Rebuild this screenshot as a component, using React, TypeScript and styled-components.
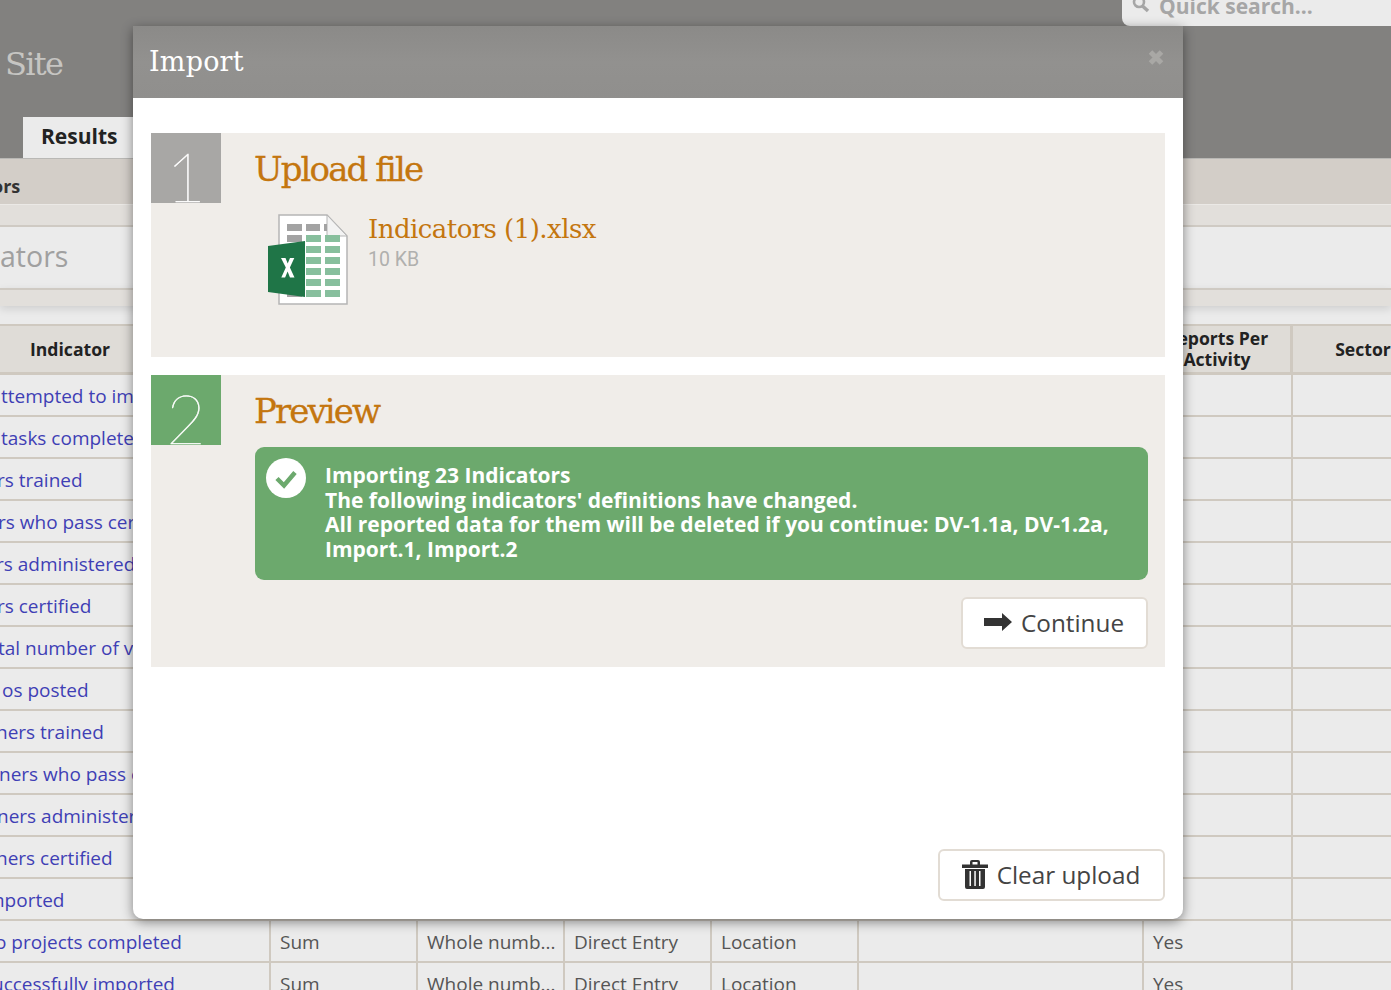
import React from "react";
import styled, { createGlobalStyle } from "styled-components";

const Global = createGlobalStyle`
  html, body { margin: 0; padding: 0; background: #ebebeb; }
  body { width: 1391px; height: 990px; overflow: hidden; font-family: "Open Sans", "Liberation Sans", sans-serif; }
  * { box-sizing: border-box; }
`;
const Page = styled.div`width: 1391px; height: 990px; overflow: hidden; position: relative; background: #ebebeb;`;
const Header = styled.header`height: 159px; background: #82817f; border-bottom: 1px solid #b9b8b5; display: flex; flex-direction: column;`;
const SearchRow = styled.div`height: 26px; display: flex; justify-content: flex-end;`;
const SearchBox = styled.div`width: 269px; height: 26px; background: #ebebeb; border-bottom-left-radius: 8px; display: flex; align-items: flex-end; gap: 9px; padding: 0 0 0 10px; color: #a6a6a6; font-weight: 700; font-size: 21px; line-height: 30px; overflow: hidden;
  svg { flex: none; margin-bottom: 11px; }
  span { margin-bottom: 5px; white-space: nowrap; }`;
const SiteTitle = styled.div`height: 91px; padding: 0 0 0 5px; font-family: "DejaVu Serif", serif; font-weight: 300; font-size: 32px; line-height: 76px; color: #c6c5c2; letter-spacing: -1.7px;`;
const Tabs = styled.div`display: flex; padding-left: 23px;`;
const Tab = styled.div`height: 41px; width: 140px; background: #ebebeb; font-weight: 700; font-size: 21px; line-height: 38px; padding-left: 18px; color: #222;`;
const NavBand = styled.div`height: 46px; background: #d3cec8; font-weight: 700; font-size: 18px; line-height: 54px; color: #333; text-indent: -8px; border-bottom: 1px solid #ebe9e6; overflow: hidden;`;
const ThinBand = styled.div<{ $h: number }>`height: ${p => p.$h}px; background: #e2dfdb; border-bottom: 2px solid #cfcac3;`;
const TitleBand = styled.div`height: 61px; background: #ebebeb; font-size: 28.500px; line-height: 58px; color: #a0a0a0; text-indent: 0;`;
const LowerBand = styled.div`height: 18px; background: #e2dfdb; border-top: 2px solid #cfcac3; box-shadow: 0 3px 8px rgba(0,0,0,.12);`;
const Gap = styled.div`height: 18px;`;
const Table = styled.div`margin-left: -128px; width: 1568px; border-top: 2px solid #cfc9c0; display: grid; grid-template-columns: 399px 147px 147px 147px 147px 285px 149px 143px;`;
const HeadCell = styled.div`height: 49px; background: #dfdcd7; border-bottom: 3px solid #cfc9c0; border-right: 3px solid #cfc9c0; display: flex; align-items: center; justify-content: center; text-align: center; font-weight: 700; font-size: 17.600px; line-height: 21px; color: #222;`;
const Cell = styled.div`height: 42px; border-bottom: 2px solid #cfc9c0; border-right: 2px solid #cfc9c0; padding: 0 9px; font-size: 19px; line-height: 42px; color: #555; white-space: nowrap; overflow: hidden; background: #ebebeb;`;
const LinkCell = styled(Cell)<{ $x: number }>`color: #3f3fb5; padding-left: ${p => 128 + p.$x}px;`;

const Backdrop = styled.div`position: absolute; left: 133px; top: 26px; width: 1050px; height: 893px; background: #fff; border-radius: 0 0 10px 10px; box-shadow: 0 3px 12px rgba(0,0,0,.45); display: flex; flex-direction: column;`;
const ModalHead = styled.div`height: 72px; background: linear-gradient(180deg,#8b8a88,#92918f 50%,#908f8d); display: flex; align-items: center; justify-content: space-between; padding: 0 19px 0 16px;`;
const ModalTitle = styled.h2`margin: 0; font-family: "DejaVu Serif", serif; font-weight: 400; font-size: 27px; line-height: 76px; color: #fff; letter-spacing: 0.2px;`;
const Close = styled.span`display: flex; margin-top: -9px;`;
const ModalBody = styled.div`flex: 1; padding: 35px 18px 18px; display: flex; flex-direction: column; gap: 18px;`;
const Step = styled.section<{ $h: number }>`height: ${p => p.$h}px; background: #f0ede9; display: flex; flex: none;`;
const Badge = styled.div<{ $bg: string }>`flex: none; width: 70px; height: 70px; background: ${p => p.$bg}; color: #fff; font-family: Lato, "Open Sans", sans-serif; font-weight: 100; font-size: 68px; line-height: 86px; text-align: center; overflow: hidden; -webkit-text-stroke: 0.5px #fff;`;
const StepMain = styled.div`flex: 1; padding: 0 17px 0 34px; display: flex; flex-direction: column;`;
const StepTitle = styled.h3`margin: 0 0 0 -1px; font-family: "DejaVu Serif", serif; font-weight: 400; font-size: 34px; line-height: 72px; height: 72px; color: #c4760f; letter-spacing: -1.900px; -webkit-text-stroke: 0.3px #c4760f;`;
const FileRow = styled.div`display: flex; padding-left: 13px; margin-top: 9px; gap: 20px;`;
const FileName = styled.div`font-family: "DejaVu Serif", serif; font-size: 26px; line-height: 32px; letter-spacing: -0.55px; color: #c4760f; margin-top: -1px;`;
const FileSize = styled.div`font-family: Roboto, sans-serif; font-size: 19.500px; line-height: 30px; color: #b0b0ae;`;
const Alert = styled.div`height: 132.500px; background: #6ca96d; border-radius: 9px; display: flex; gap: 18px; padding: 16px 10px; color: #fff; font-weight: 700; font-size: 21px; line-height: 24.500px; letter-spacing: 0;`;
const AlertIcon = styled.svg`flex: none; width: 42px; height: 42px; margin-top: -6px;`;
const Row = styled.div`display: flex; justify-content: flex-end; margin-top: 17.500px;`;
const Btn = styled.button<{ $w: number }>`width: ${p => p.$w}px; height: 52px; background: #fff; border: 2px solid #e2dcd4; border-radius: 6px; display: flex; align-items: center; justify-content: center; gap: 9px; font-family: "Open Sans", sans-serif; font-size: 24.300px; color: #444; padding: 0 1px 2px 0;`;
const Footer = styled.div`margin-top: auto; display: flex; justify-content: flex-end;`;

const rows: [string, number][] = [
  ["ttempted to import", 1], ["tasks completed", 1], ["rs trained", -3], ["rs who pass certification", -2], ["rs administered", -4],
  ["rs certified", -3], ["tal number of visits", -2], ["os posted", 2], ["ners trained", -4], ["ners who pass certification", -1],
  ["ners administered", -3], ["ners certified", -4], ["mported", -13], ["o projects completed", -5], ["uccessfully imported", -8],
];

const Excel = () => (
  <svg width="80" height="92" viewBox="0 0 80 92">
    <path d="M11 1H59L79 22V90H11Z" fill="#fff" stroke="#b5b5b5" strokeWidth="1.500" />
    <path d="M59 1V22H79Z" fill="#f3f3f3" stroke="#b5b5b5" strokeWidth="1" />
    <g fill="#a3a3a3">
      <rect x="19" y="10" width="15" height="7" /><rect x="38" y="10" width="14" height="7" /><rect x="56" y="10" width="3" height="7" />
      <rect x="19" y="21" width="15" height="7" /><rect x="19" y="76" width="15" height="7" />
    </g>
    <g fill="#87bf9d">
      {[21, 32, 43, 54, 65, 76].map(y => (
        <React.Fragment key={y}><rect x="38" y={y} width="15" height="7" /><rect x="57" y={y} width="15" height="7" /></React.Fragment>
      ))}
    </g>
    <path d="M0 32L37 27V83L0 78Z" fill="#1f7547" />
    <path d="M13 44h4.500l2.200 5.500 2.300-5.500h4.300l-4.400 9.500 4.600 10h-4.500l-2.400-6-2.500 6H13.300l4.500-10Z" fill="#fff" />
  </svg>
);
const Arrow = () => (
  <svg width="28" height="18" viewBox="0 0 28 18"><path d="M0 5h18V0l10 9-10 9v-5H0Z" fill="#333" /></svg>
);
const Trash = () => (
  <svg width="26" height="29" viewBox="0 0 26 29" fill="#333">
    <path fillRule="evenodd" d="M0 4.500h8V2q0-2 2-2h6q2 0 2 2v2.500h8V8H0ZM10.500 2v2.500h5V2Z" />
    <path fillRule="evenodd" d="M3 9h20v18q0 2-2 2H5q-2 0-2-2ZM7.500 11v15H9V11ZM12.300 11v15h1.500V11ZM17 11v15h1.500V11Z" />
  </svg>
);

export default function App() {
  return (
    <Page>
      <Global />
      <Header>
        <SearchRow>
          <SearchBox>
            <svg width="18" height="18" viewBox="0 0 18 18"><circle cx="7" cy="5" r="5" fill="none" stroke="#a6a6a6" strokeWidth="2.600" /><path d="M10.500 9L16 14" stroke="#a6a6a6" strokeWidth="3.400" /></svg>
            <span>Quick search...</span>
          </SearchBox>
        </SearchRow>
        <SiteTitle>Site</SiteTitle>
        <Tabs><Tab>Results</Tab></Tabs>
      </Header>
      <NavBand>ors</NavBand>
      <ThinBand $h={22} />
      <TitleBand>ators</TitleBand>
      <LowerBand />
      <Gap />
      <Table>
        <HeadCell>Indicator</HeadCell><HeadCell>Type</HeadCell><HeadCell>Format</HeadCell><HeadCell>Source</HeadCell><HeadCell>Level</HeadCell><HeadCell>Unit</HeadCell><HeadCell>Reports Per<br />Activity</HeadCell><HeadCell>Sector</HeadCell>
        {rows.map(([t, x]) => (
          <React.Fragment key={t}>
            <LinkCell $x={x}>{t}</LinkCell>
            <Cell>Sum</Cell><Cell>Whole numb...</Cell><Cell>Direct Entry</Cell><Cell>Location</Cell><Cell /><Cell>Yes</Cell><Cell />
          </React.Fragment>
        ))}
      </Table>
      <Backdrop>
        <ModalHead>
          <ModalTitle>Import</ModalTitle>
          <Close><svg width="16" height="17" viewBox="0 0 16 17"><path d="M2.500 3L13.500 14M13.500 3L2.500 14" stroke="#a9a8a5" strokeWidth="5" /></svg></Close>
        </ModalHead>
        <ModalBody>
          <Step $h={224}>
            <Badge $bg="#a8a7a5">1</Badge>
            <StepMain>
              <StepTitle>Upload file</StepTitle>
              <FileRow>
                <Excel />
                <div>
                  <FileName>Indicators (1).xlsx</FileName>
                  <FileSize>10 KB</FileSize>
                </div>
              </FileRow>
            </StepMain>
          </Step>
          <Step $h={292}>
            <Badge $bg="#6ca96d">2</Badge>
            <StepMain>
              <StepTitle>Preview</StepTitle>
              <Alert>
                <AlertIcon viewBox="0 0 42 42">
                  <circle cx="21" cy="21" r="20" fill="#fff" />
                  <path d="M12 21.500l7 7 11-13" fill="none" stroke="#6ca96d" strokeWidth="4.500" />
                </AlertIcon>
                <div>
                  Importing 23 Indicators<br />
                  The following indicators' definitions have changed.<br />
                  All reported data for them will be deleted if you continue: DV-1.1a, DV-1.2a, Import.1, Import.2
                </div>
              </Alert>
              <Row><Btn $w={187}><Arrow />Continue</Btn></Row>
            </StepMain>
          </Step>
          <Footer><Btn $w={227}><Trash />Clear upload</Btn></Footer>
        </ModalBody>
      </Backdrop>
    </Page>
  );
}
